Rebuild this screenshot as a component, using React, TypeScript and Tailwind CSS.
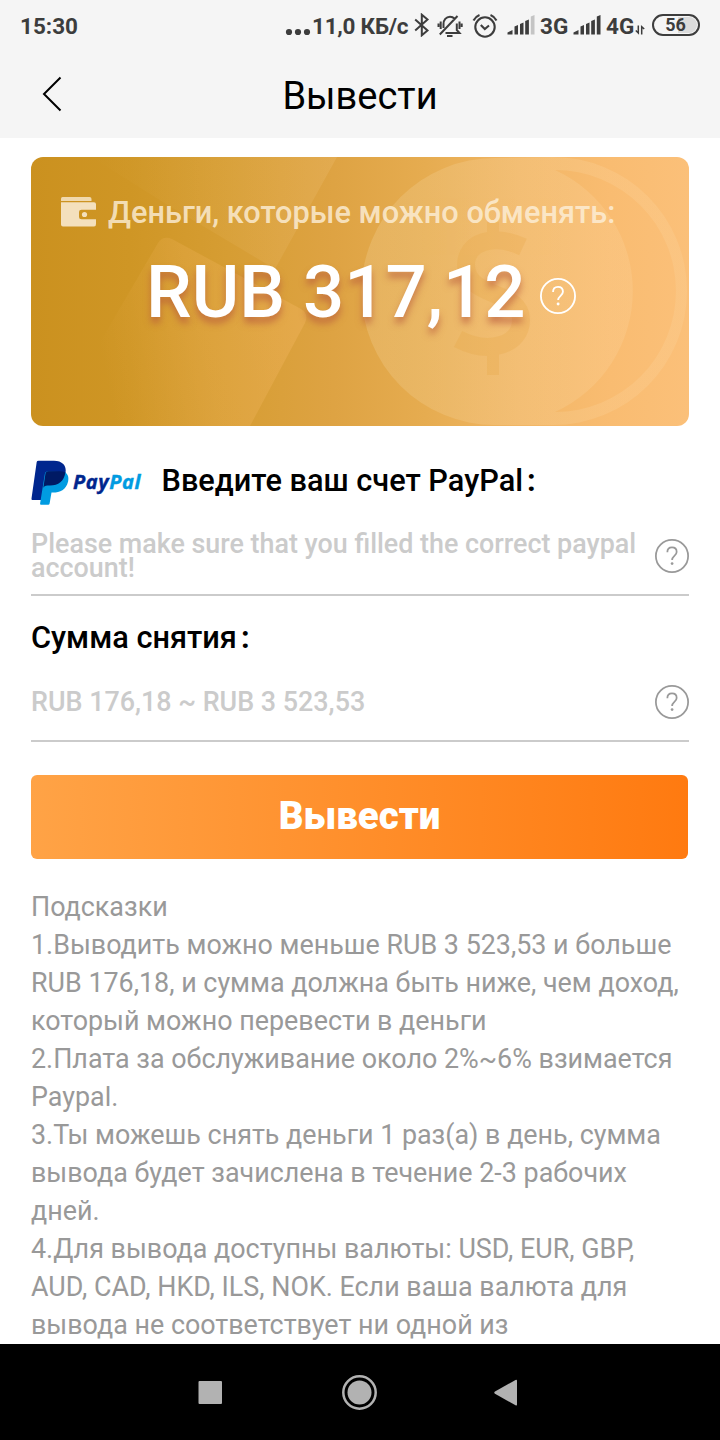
import type { ReactNode } from "react";

function Help({ color, className }: { color: string; className: string }) {
  return (
    <svg viewBox="0.5 0.5 35 35" className={className} fill="none" stroke={color} strokeWidth="1.8">
      <circle cx="18" cy="18" r="16.6" />
      <path d="M13.2 14.200c0-3.200 2-5 4.800-5s4.800 1.800 4.800 4.700c0 3.800-4.700 4.200-4.700 8.100" />
      <circle cx="18.100" cy="25.800" r="1.400" fill={color} stroke="none" />
    </svg>
  );
}

function Signal({ last }: { last: string }) {
  return (
    <svg viewBox="0 0 28 20" className="h-5 w-7 shrink-0" fill="#3d3d3d">
      <path d="M0.5 19.5v-2l5-2.5v4.5z" />
      <path d="M7.5 19.5v-8l3.500-1.500v9.500z" />
      <path d="M13 19.500v-10.500l3.500-1.500v12z" />
      <path d="M18.200 19.500v-13.500l3.700-1.500v15z" />
      <path d="M23.800 19.500v-18l3.700-1.500v19.500z" fill={last} />
    </svg>
  );
}

function StatusBar() {
  return (
    <div className="flex h-[52px] items-center pl-5 text-[22.5px] leading-[26px] font-bold text-[#3d3d3d]">
      <span className="w-[265px]">15:30</span>
      <svg viewBox="0 0 26 8" className="mt-[12px] h-2 w-[26px]" fill="#3d3d3d">
        <circle cx="4" cy="4" r="3.100" />
        <circle cx="13" cy="4" r="3.100" />
        <circle cx="22" cy="4" r="3.100" />
      </svg>
      <span className="ml-px w-[102px] text-[22.5px] tracking-[-0.25px] whitespace-nowrap">11,0 КБ/с</span>
      <svg viewBox="0 0 16 24" className="mb-[2px] h-6 w-4" fill="none" stroke="#3d3d3d" strokeWidth="2">
        <path d="M1.200 6.500L13.500 17.500 7.800 22.300V1.700L13.500 6.500 1.200 17.500" />
      </svg>
      <svg viewBox="0 0 26 24" className="mb-px ml-[7px] h-6 w-[26px]" fill="none" stroke="#3d3d3d" strokeWidth="2">
        <path d="M6.500 14V10c0-4 2.500-7.300 6.500-7.300 2 0 3.500.8 4.600 2M19.800 9.500v6.500l2.700 3H8.500M3.700 7.500v7.500M1.500 9.500v3.500M22.500 7.500v7.500M24.700 9.500v3.500M2.800 20.500L20.500 2M10 22h5.500" />
      </svg>
      <svg viewBox="0 0 26 26" className="mb-px ml-[9px] h-[26px] w-[26px]" fill="none" stroke="#3d3d3d" strokeWidth="2.100">
        <circle cx="13" cy="14" r="9.700" />
        <path d="M8.800 12l4 4L17 12.500M1.500 7.500C3 4.500 5 3 7.500 2M24.500 7.500C23 4.500 21 3 18.500 2" />
      </svg>
      <div className="mb-[2px] ml-[9px] flex items-center">
        <Signal last="#c4c4c4" />
      </div>
      <span className="ml-[5px] w-[28px]">3G</span>
      <div className="mb-[2px] ml-[5px] flex items-center">
        <Signal last="#3d3d3d" />
      </div>
      <span className="ml-[5px] w-[28px]">4G</span>
      <svg viewBox="0 0 10 10" className="mt-[8px] ml-px h-[10px] w-[10px]" fill="none" stroke="#3d3d3d" strokeWidth="1.500">
        <path d="M0.800 5.500L3.300 8V0.500M9.200 4L6.700 1.700V9.500" />
      </svg>
      <div className="mb-[3px] ml-[7px] h-[22px] w-[48px] rounded-full border-2 border-[#3d3d3d] p-px">
        <div className="flex h-full items-center justify-center rounded-full bg-[linear-gradient(90deg,#f5f5f5_55%,#dcdcdc_55%)] pr-px text-[18px] leading-4">56</div>
      </div>
    </div>
  );
}

function CardArt() {
  return (
    <svg viewBox="0 0 658 269" className="absolute inset-0 h-full w-full">
      <defs>
        <linearGradient id="sheet" x1="60" y1="0" x2="306" y2="0" gradientUnits="userSpaceOnUse">
          <stop offset="0" stopColor="#ffd9a0" stopOpacity="0" />
          <stop offset="1" stopColor="#ffd9a0" stopOpacity="0.14" />
        </linearGradient>
        <linearGradient id="square" x1="70" y1="200" x2="270" y2="160" gradientUnits="userSpaceOnUse">
          <stop offset="0" stopColor="#ffc070" stopOpacity="0" />
          <stop offset="0.5" stopColor="#ffc070" stopOpacity="0.18" />
          <stop offset="1" stopColor="#ffc070" stopOpacity="0.26" />
        </linearGradient>
        <linearGradient id="rim" x1="330" y1="0" x2="658" y2="0" gradientUnits="userSpaceOnUse">
          <stop offset="0" stopColor="#fff0d0" stopOpacity="0.17" />
          <stop offset="1" stopColor="#ffecc8" stopOpacity="0.12" />
        </linearGradient>
      </defs>
      <path d="M0 0H306L244 112 140 50 60 0z" fill="url(#sheet)" />
      <path d="M127 86q5-8 14-4L270 152q8 5 4 14L219 269H20z" fill="url(#square)" />
      <path
        fillRule="evenodd"
        d="M464 1a133 133 0 1 0 0 267h58a134 134 0 0 0 0-268zM524 13a121 121 0 0 1 0 242a133 133 0 0 0 0-242z"
        fill="url(#rim)"
      />
      <g fill="none" stroke="#e5a43f" strokeWidth="18" opacity="0.24">
        <path d="M492 90C462 76 435 85 435 108C435 142 490 132 490 163C490 188 458 198 427 182" />
        <path d="M462 65v12M462 197v21" strokeWidth="12" />
      </g>
    </svg>
  );
}

function Wallet() {
  return (
    <svg viewBox="0 0 35 30" className="mb-px h-[30px] w-[35px]" fill="#f4e0bd">
      <path d="M0 4V1.500Q0 0 1.500 0H28.500Q30.500 0 30.500 2V4z" opacity="0.9" />
      <path d="M0 5.300H33Q35 5.300 35 7.300V12.800H20.500Q18 12.800 18 15V20Q18 22.200 20.500 22.200H35V27Q35 29.500 33 29.500H2Q0 29.500 0 27.500z" />
      <circle cx="23.500" cy="17.500" r="2.600" />
    </svg>
  );
}

function PayPalLogo() {
  return (
    <div className="flex h-[46px] w-[112px] items-center">
      <svg viewBox="0 0 38 46" className="h-[46px] w-[38px] shrink-0">
        <path d="M5.700 2Q6 .7 7.500 .7H23C31 .7 36 5.500 34.500 13 33 21.500 27.500 26 19 26H14.500L11.500 40H1.500Q.3 40 .5 38.500z" fill="#00268e" />
        <path d="M34.200 12.300C37.300 14.500 37.900 18 37.100 21.500 35 30 29 32.500 22 32.500H20.500L18.600 43.500Q18.400 44.800 17.200 44.800H10Q8.900 44.800 9.100 43.500L13.800 14Q14 11.500 16 11.500z" fill="#009be1" />
        <path d="M34.400 12.300C33 21.500 27.500 25.500 19 25.500H16.500Q13 25.500 12.300 28L14.400 14Q14.800 11.200 17.500 11.200H28Q32 11.200 34.400 12.300z" fill="#001a64" />
      </svg>
      <span className="mb-[2px] ml-[4px] font-['Open_Sans'] text-[20px] leading-6 font-bold tracking-[0.6px] text-[#00268e] italic [-webkit-text-stroke:0.4px]">
        Pay<span className="text-[#009be1]">Pal</span>
      </span>
    </div>
  );
}

function Label({ children }: { children: ReactNode }) {
  return (
    <span className="flex text-[30.72px] leading-9 font-medium whitespace-nowrap text-black">
      {children}
      <span className="ml-[4px] font-bold">:</span>
    </span>
  );
}

const tips = [
  "Подсказки",
  "1.Выводить можно меньше RUB 3 523,53 и больше",
  "RUB 176,18, и сумма должна быть ниже, чем доход,",
  "который можно перевести в деньги",
  "2.Плата за обслуживание около 2%~6% взимается",
  "Paypal.",
  "3.Ты можешь снять деньги 1 раз(а) в день, сумма",
  "вывода будет зачислена в течение 2-3 рабочих",
  "дней.",
  "4.Для вывода доступны валюты: USD, EUR, GBP,",
  "AUD, CAD, HKD, ILS, NOK. Если ваша валюта для",
  "вывода не соответствует ни одной из",
];

export default function App() {
  return (
    <div className="flex h-[1440px] w-[720px] flex-col overflow-hidden bg-white font-[Roboto,'Noto_Sans_CJK_SC',sans-serif]">
      <header className="h-[138px] shrink-0 bg-[#f5f5f5]">
        <StatusBar />
        <div className="grid h-[86px] grid-cols-[80px_1fr_80px] items-center">
          <svg viewBox="0 0 20 36" className="mb-[3px] ml-[42px] h-9 w-5" fill="none" stroke="#000" strokeWidth="2">
            <path d="M18.500 1.500L2 18l16.500 16.500" />
          </svg>
          <h1 className="pt-[2px] text-center text-[38px] leading-[44px] text-black">Вывести</h1>
        </div>
      </header>

      <main className="flex h-[1206px] shrink-0 flex-col overflow-hidden px-[31px] pt-[19px]">
        <section className="relative h-[269px] shrink-0 overflow-hidden rounded-[12px] bg-[linear-gradient(90deg,#cb911f_0%,#cf9625_15%,#d69d33_30%,#dea343_46%,#e6ac50_60%,#f1b665_74%,#f9bc71_88%,#fbc079_100%)]">
          <CardArt />
          <div className="relative flex items-center pt-[37px] pl-[30px]">
            <Wallet />
            <span className="mt-px ml-[12px] text-[30.720px] leading-9 font-medium whitespace-nowrap text-[#fdf1dc]/80">Деньги, которые можно обменять:</span>
          </div>
          <div className="relative mt-[20px] flex items-center pl-[115px]">
            <span className="w-[379px] text-[72.600px] leading-[84px] font-medium whitespace-nowrap text-white [text-shadow:0_6px_7px_rgba(180,84,60,0.62)]">RUB 317,12</span>
            <Help color="#ffffff" className="mt-[6px] ml-[15px] h-9 w-9" />
          </div>
        </section>

        <div className="mt-[34px] flex h-[46px] shrink-0 items-center">
          <PayPalLogo />
          <div className="mb-[4px] ml-[18.5px] flex">
            <Label>Введите ваш счет PayPal</Label>
          </div>
        </div>
        <div className="flex h-[90px] shrink-0 items-center border-b-2 border-[#cbcbcb]">
          <p className="w-[624px] pt-[12px] text-[26.880px] leading-6 font-medium text-[#cbcbcb]">
            Please make sure that you filled the correct paypal
            <br />
            account!
          </p>
          <Help color="#999999" className="mt-[11px] h-[34px] w-[34px] shrink-0" />
        </div>
        <div className="mt-[24px] flex shrink-0">
          <Label>Сумма снятия</Label>
        </div>
        <div className="flex h-[86px] shrink-0 items-center border-b-2 border-[#cbcbcb]">
          <p className="w-[624px] pt-[8px] text-[26.880px] leading-8 font-medium text-[#cbcbcb]">RUB 176,18 ~ RUB 3 523,53</p>
          <Help color="#999999" className="mt-[7px] h-[34px] w-[34px] shrink-0" />
        </div>
        <button className="mt-[33px] h-[84px] w-[657px] shrink-0 rounded-[6px] bg-[linear-gradient(90deg,#ffa346,#ff7a10)] pb-[2px] text-[38.4px] leading-[44px] font-black text-white">
          Вывести
        </button>
        <div className="mt-[29px] text-[26.880px] leading-[38px] whitespace-nowrap text-[#999999]">
          {tips.map((line) => (
            <p key={line}>{line}</p>
          ))}
        </div>
      </main>

      <nav className="flex h-24 shrink-0 items-center bg-black">
        <svg viewBox="0 0 720 96" className="h-24 w-[720px]" fill="#b2b2b2">
          <rect x="198.500" y="37" width="23.500" height="23" rx="1" />
          <circle cx="359.500" cy="48.500" r="12" />
          <circle cx="359.500" cy="48.500" r="16.200" fill="none" stroke="#b2b2b2" strokeWidth="2.500" />
          <path d="M495 49.800Q493.500 48.700 495 47.600L515.500 36Q517 35.200 517 37V60.500Q517 62 515.500 61.200z" />
        </svg>
      </nav>
    </div>
  );
}
